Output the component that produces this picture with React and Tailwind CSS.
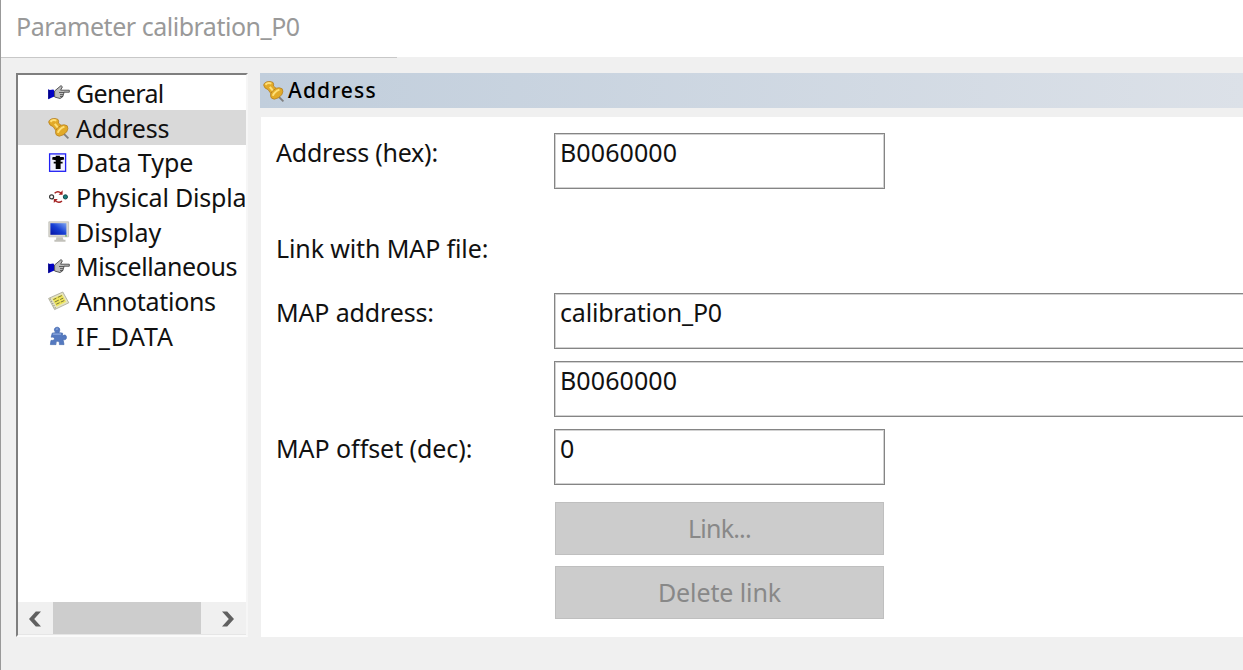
import React from 'react';

function HandIcon() {
  return (
    <svg className="h-[22px] w-[22px]" viewBox="0 0 22 22">
      <path d="M.3 7.2 L1.8 8 L5.4 7.6 L6.4 9 V14.6 L4 15.4 L.3 17.2 Z" fill="#0000c4" />
      <path d="M.3 7.2 L1.8 9 V15.8 L.3 17.2 Z" fill="#000080" />
      <path d="M6.6 9 L13 3.6 L14.4 4.8 L12.6 8.2 H21.3 V10.2 H16 L15.5 12.5 L14.5 15 L12 16.5 L6.6 15 Z" fill="#bcbcbc" stroke="#484848" strokeWidth=".9" />
      <path d="M11 10.5h5M12 12.6h3.5M12 14.5h3" stroke="#444" strokeWidth=".8" />
    </svg>
  );
}

function PinIcon() {
  return (
    <svg className="h-[22px] w-[22px]" viewBox="0 0 22 22">
      <path d="M14.5 15.5 L20.4 21.4" stroke="#808080" strokeWidth="1.8" />
      <path d="M.6 5 Q.8 3 3.8 1.8 Q7.2 .8 10 2.4 Q11.2 4 10.4 6 L13 8.2 Q16.6 7 19.2 8.8 Q20.8 11.4 18.8 14.8 Q15.6 18.6 11.4 19.2 Q7.8 18.8 7.6 16.2 L7.6 13.2 L5 9.6 Q1.2 8.6 .6 5Z" fill="#e2aa28" stroke="#b07818" strokeWidth=".7" />
      <path d="M2.4 4.8 Q4.8 2.2 8.4 3.6 M6.8 6.8 L10.2 11 M9.8 15.8 Q11 11.8 16.4 9.6" fill="none" stroke="#ffdf76" strokeWidth="2" />
      <path d="M12.8 8.6 Q9.4 10.2 8 13.2" fill="none" stroke="#b47a16" strokeWidth=".8" />
    </svg>
  );
}

function TypeIcon() {
  return (
    <svg className="h-[22px] w-[22px]" viewBox="0 0 22 22">
      <rect x="1.6" y="1.9" width="16" height="17.4" fill="#f2f2ff" stroke="#2020f4" strokeWidth="1.3" />
      <path d="M7.7 3.8h4.2v1.2h3.8l.5 2.4-3.6.9v1.4h2v1.9h-2V17H7.7v-5.4h-2V9.7h2V8.3l-3.6-.9.5-2.4h3.1Z" fill="#000" />
    </svg>
  );
}

function CycleIcon() {
  return (
    <svg className="h-[22px] w-[22px]" viewBox="0 0 22 22">
      <circle cx="3.6" cy="10.9" r="2" fill="#fff" stroke="#333" strokeWidth="1.2" />
      <circle cx="17.4" cy="10.9" r="2.1" fill="#168080" stroke="#124848" strokeWidth="1" />
      <path d="M6.6 7.2 Q9.8 4.2 13 7 M14 15 Q10.8 17.8 7.4 14.8" fill="none" stroke="#a52222" strokeWidth="1.4" />
      <path d="M14.6 4.2V8.7H10.6Z M5.8 17V13H9.8Z" fill="#a52222" />
    </svg>
  );
}

function MonitorIcon() {
  return (
    <svg className="h-[22px] w-[22px]" viewBox="0 0 22 22">
      <defs>
        <linearGradient id="screen" x1="0" y1="1" x2="1" y2="0">
          <stop offset="0" stopColor="#0612a4" />
          <stop offset=".5" stopColor="#1740d4" />
          <stop offset="1" stopColor="#7da4f0" />
        </linearGradient>
      </defs>
      <path d="M.8 .8H20.6V15.8H.8Z" fill="#dcdad2" stroke="#b8b7b0" strokeWidth=".7" />
      <rect x="2.4" y="2.2" width="16" height="11.6" fill="url(#screen)" />
      <path d="M8.3 16.2h6.4l.8 2.5h2v2H6.4v-2h1.6Z" fill="#c2c1ba" />
      <path d="M17 14.9h2" stroke="#5a5" strokeWidth="1" />
    </svg>
  );
}

function NoteIcon() {
  return (
    <svg className="h-[22px] w-[22px]" viewBox="0 0 22 22">
      <path d="M.6 8.4 L14.8 2 L20.8 12.8 L6.6 19.6 Z" fill="#e6e4c0" stroke="#a5a594" strokeWidth=".8" />
      <path d="M4.3 8.8 L14 4.4 L18 11.8 L8.5 16.4Z" fill="#efe65a" />
      <path d="M5.4 9.6l3-1.4M9.8 7.4l4-1.8M6.8 12l4-1.9M12.2 9.5l3-1.4M8.2 14.3l3.4-1.6M12.8 12.1l3.5-1.6" stroke="#77743a" strokeWidth="1" />
      <path d="M2 8.6 L7.6 18.6" stroke="#999" strokeWidth="1.3" strokeDasharray="1.2 1.3" />
    </svg>
  );
}

function PuzzleIcon() {
  return (
    <svg className="h-[22px] w-[22px]" viewBox="0 0 22 22">
      <path d="M4.2 8.2L7.8 7.6Q6 5.8 6.4 4Q7.2 2 9.4 2.2Q12 2.5 11.8 5.1Q11.7 6.7 10.6 7.6L14.6 8.2V11.2Q16 9.4 17.6 10.2Q19 11.6 18.2 13.8Q17 15.4 15 14.3L16 19.6H11.4Q12.2 16.6 9.8 16.2Q7.2 16 8 19.6H2.4L3 15.4Q6.6 16.2 6.5 13.6Q6 11.2 3.2 12.2Z" fill="#5579c0" stroke="#4267ae" strokeWidth=".7" />
      <path d="M8 4.7Q8.9 3.4 10.1 4.2M4.8 9.2H13" fill="none" stroke="#8da9de" strokeWidth="1.2" />
    </svg>
  );
}

const items = [
  { label: 'General', Icon: HandIcon, track: 'tracking-[-0.65px]' },
  { label: 'Address', Icon: PinIcon, track: 'tracking-[-0.2px]', selected: true },
  { label: 'Data Type', Icon: TypeIcon, track: 'tracking-[0px]' },
  { label: 'Physical Displa', Icon: CycleIcon, track: 'tracking-[-0.2px]' },
  { label: 'Display', Icon: MonitorIcon, track: 'tracking-[0px]' },
  { label: 'Miscellaneous', Icon: HandIcon, track: 'tracking-[-0.4px]' },
  { label: 'Annotations', Icon: NoteIcon, track: 'tracking-[-0.3px]' },
  { label: 'IF_DATA', Icon: PuzzleIcon, track: 'tracking-[0.7px]' },
];

function Sidebar() {
  return (
    <nav className="flex h-[564px] w-[232px] flex-col overflow-hidden border-2 border-t-[#7f7f7f] border-r-[#f6f6f6] border-b-[#fafafa] border-l-[#7f7f7f] bg-white">
      <ul className="flex-1 pt-[0.5px]">
        {items.map(({ label, Icon, track, selected }) => (
          <li key={label} className={`flex h-[34.7px] items-center pl-[30px] ${selected ? 'bg-[#d9d9d9]' : ''}`}>
            <span className="mt-px mr-[6px] shrink-0"><Icon /></span>
            <span className={`whitespace-nowrap leading-[34px] ${track}`}>{label}</span>
          </li>
        ))}
      </ul>
      <div className="flex h-[33px] border-b border-[#e6e6e6] bg-[#f0f0f0]">
        <div className="flex w-[35px] items-center pt-px pl-[11px]">
          <svg className="h-4 w-3" viewBox="0 0 12 16"><path d="M6.8 .6H12L5.2 8L12 15.4H6.8L0 8Z" fill="#606060" /></svg>
        </div>
        <div className="w-[148px] bg-[#cdcdcd]" />
        <div className="flex flex-1 items-center pt-px pl-[21px]">
          <svg className="h-4 w-3" viewBox="0 0 12 16"><path d="M5.2 .6H0L6.8 8L0 15.4H5.2L12 8Z" fill="#606060" /></svg>
        </div>
      </div>
    </nav>
  );
}

const field = 'h-14 shrink-0 border border-[#858585] bg-white pl-[5px] leading-[37px] whitespace-nowrap outline-1 -outline-offset-2 outline-[#d2d2d2]';

function Label({ children, track }) {
  return (
    <span className="w-[293px] shrink-0 pl-[15px] leading-[39px]">
      <span className={track}>{children}</span>
    </span>
  );
}

export default function App() {
  return (
    <div className="flex h-[670px] w-[1243px] flex-col overflow-hidden border-l border-[#999] bg-[#f0f0f0] font-['Noto_Sans','Open_Sans',sans-serif] text-[25px] text-[#111]">
      <header className="h-[57px] shrink-0 bg-white pl-[15px] leading-[53px] text-[#999]">
        <span className="tracking-[-0.48px]">Parameter calibration_P0</span>
      </header>
      <div className="h-px w-[396px] shrink-0 bg-[#c8c8c8]" />
      <div className="flex pt-[15px] pl-[15px]">
        <Sidebar />
        <main className="ml-3 flex w-[983px] shrink-0 flex-col">
          <div className="flex h-[35px] items-center bg-linear-to-r from-[#c1cedc] to-[#dce1e8] pl-[3px]">
            <span className="mt-px"><PinIcon /></span>
            <h1 className="ml-[3px] text-[21px] font-medium tracking-[1.15px] text-black">Address</h1>
          </div>
          <section className="mt-[9px] ml-px flex h-[520px] flex-col bg-white pt-4">
            <div className="flex">
              <Label track="tracking-[-0.23px]">Address (hex):</Label>
              <div className={`${field} w-[331px]`}><span className="tracking-[0.1px]">B0060000</span></div>
            </div>
            <div className="mt-10 pl-[15px] leading-[39px]"><span className="tracking-[-0.12px]">Link with MAP file:</span></div>
            <div className="mt-[25px] flex">
              <Label track="tracking-[-0.15px]">MAP address:</Label>
              <div className={`${field} w-[700px]`}><span className="tracking-[-0.2px]">calibration_P0</span></div>
            </div>
            <div className="mt-3 flex pl-[293px]">
              <div className={`${field} w-[700px]`}><span className="tracking-[0.1px]">B0060000</span></div>
            </div>
            <div className="mt-3 flex">
              <Label track="tracking-[-0.06px]">MAP offset (dec):</Label>
              <div className={`${field} w-[331px]`}>0</div>
            </div>
            <div className="mt-[17px] flex flex-col gap-[11px] pl-[294px]">
              <button className="h-[53px] w-[329px] border border-[#bfbfbf] bg-[#ccc] text-[#888]"><span className="tracking-[-0.8px]">Link...</span></button>
              <button className="h-[53px] w-[329px] border border-[#bfbfbf] bg-[#ccc] text-[#888]"><span className="tracking-[-0.1px]">Delete link</span></button>
            </div>
          </section>
        </main>
      </div>
    </div>
  );
}
